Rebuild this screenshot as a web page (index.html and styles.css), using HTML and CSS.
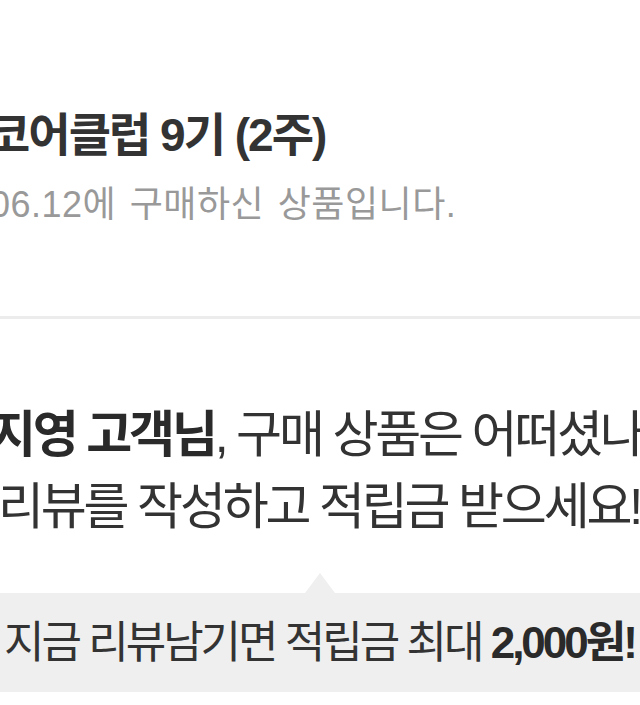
FILE: index.html
```html
<!DOCTYPE html>
<html lang="ko">
<head>
<meta charset="utf-8">
<title>리뷰 작성</title>
<link rel="stylesheet" href="styles.css">
</head>
<body>
<div class="page">
  <section class="product">
    <h1 class="product-title">코어클럽 9기 (2주)</h1>
    <p class="product-date">06.12에 구매하신 상품입니다.</p>
  </section>
  <div class="divider"></div>
  <section class="greeting">
    <p class="greet-line greet-first"><strong>지영 고객님</strong>, 구매 상품은 어떠셨나요?</p>
    <p class="greet-line greet-second">리뷰를 작성하고 적립금 받으세요!</p>
  </section>
  <div class="bubble">
    <p class="bubble-text">지금 리뷰남기면 적립금 최대 <strong>2,000원!</strong></p>
  </div>
</div>
</body>
</html>
```

FILE: styles.css
```css
html, body {
  margin: 0;
  padding: 0;
  background: #ffffff;
}

body {
  font-family: "Liberation Sans", "Noto Sans CJK KR", sans-serif;
  color: #333333;
}

.page {
  width: 640px;
  height: 705px;
  overflow: hidden;
}

.product {
  box-sizing: border-box;
  height: 316px;
  padding-top: 110px;
}

.product-title {
  margin: 0 0 0 -12px;
  font-size: 46px;
  line-height: 50px;
  font-weight: bold;
  letter-spacing: -2px;
  white-space: nowrap;
  color: #333333;
}

.product-date {
  margin: 25px 0 0 -10px;
  font-size: 36px;
  line-height: 40px;
  letter-spacing: 0.5px;
  word-spacing: 3px;
  color: #999999;
  white-space: nowrap;
}

.divider {
  height: 3px;
  background: #ececec;
}

.greeting {
  padding-top: 80px;
}

.greet-line {
  margin: 0;
  font-size: 50px;
  line-height: 72px;
  letter-spacing: -3.2px;
  white-space: nowrap;
  color: #333333;
}

.greet-first {
  margin-left: -10px;
}

.greet-second {
  margin-left: -2px;
}

.greet-line strong {
  font-weight: bold;
  color: #2a2a2a;
}

.bubble {
  position: relative;
  margin-top: 50px;
  height: 99px;
  background: #efefef;
  display: flex;
  align-items: center;
}

.bubble::before {
  content: "";
  position: absolute;
  left: 305px;
  top: -20px;
  border-left: 15px solid transparent;
  border-right: 15px solid transparent;
  border-bottom: 20px solid #efefef;
}

.bubble-text {
  margin: 0 0 0 4px;
  font-size: 44px;
  line-height: 50px;
  letter-spacing: -3px;
  white-space: nowrap;
  color: #333333;
}

.bubble-text strong {
  font-weight: bold;
  color: #2a2a2a;
}
```
